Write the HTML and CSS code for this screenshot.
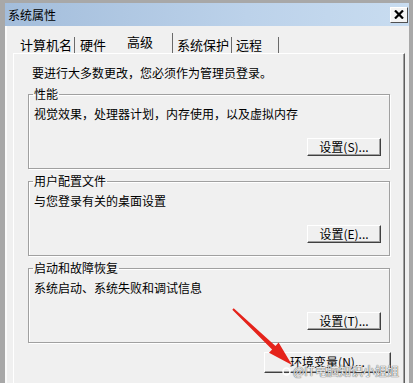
FILE: index.html
```html
<!DOCTYPE html>
<html lang="zh-CN">
<head>
  <meta charset="UTF-8">
  <meta name="viewport" content="width=device-width, initial-scale=1.0">
  <title>系统属性</title>
  <link rel="stylesheet" href="styles.css">
</head>
<body>
<div class="window">
  <div class="titlebar">
    <span class="title">系统属性</span>
    <button class="close">
      <svg width="10" height="9" viewBox="0 0 10 9"><path d="M1 0.5 L9 8.5 M9 0.5 L1 8.5" stroke="#000" stroke-width="2.2"/></svg>
    </button>
  </div>

  <div class="content">
    <div class="tabs">
      <div class="tab">计算机名</div>
      <div class="tab">硬件</div>
      <div class="tab active">高级</div>
      <div class="tab">系统保护</div>
      <div class="tab">远程</div>
    </div>

    <div class="panel">
      <p class="intro">要进行大多数更改，您必须作为管理员登录。</p>

      <fieldset class="group">
        <legend>性能</legend>
        <p class="desc">视觉效果，处理器计划，内存使用，以及虚拟内存</p>
        <div class="actions"><button class="btn">设置(S)...</button></div>
      </fieldset>

      <fieldset class="group">
        <legend>用户配置文件</legend>
        <p class="desc">与您登录有关的桌面设置</p>
        <div class="actions"><button class="btn">设置(E)...</button></div>
      </fieldset>

      <fieldset class="group">
        <legend>启动和故障恢复</legend>
        <p class="desc">系统启动、系统失败和调试信息</p>
        <div class="actions"><button class="btn">设置(T)...</button></div>
      </fieldset>

      <div class="footer">
        <button class="btn btn-wide">环境变量(N)...</button>
      </div>
    </div>
  </div>

  <!-- red arrow drawn over the screenshot -->
  <svg class="arrow" width="413" height="383" viewBox="0 0 413 383">
    <polygon points="233.7,308.3 275.5,345.9 278.6,342.6 292,365 269,352.8 272.1,349.5 232.3,309.7" fill="#e5231b"/>
  </svg>

  <div class="watermark">
    <span class="wm-icon">
      <svg width="9" height="9" viewBox="0 0 9 9"><circle cx="4.5" cy="4.5" r="3.5" fill="none" stroke="#fff" stroke-width="1.5"/></svg>
    </span>
    <span>@IT电脑知识小姐姐</span>
  </div>
</div>
</body>
</html>
```

FILE: styles.css
```css
body {
    margin: 0;
    background: #a8a8a8;
    font-family: "Noto Sans CJK SC", "Noto Sans", sans-serif;
    font-size: 12px;
    color: #000;
}
.window {
    position: relative;
    width: 413px;
    height: 383px;
    box-sizing: border-box;
    overflow: hidden;
    background: #f0f0f0;
    border-top: 3px solid #a8a8a8;
    border-left: 5px solid #a8a8a8;
    border-right: 4px solid #a8a8a8;
    box-shadow: inset 2px 0 0 #fbfbfb;
}
.titlebar {
    display: flex;
    align-items: center;
    justify-content: space-between;
    height: 23px;
    padding-left: 3px;
    background: linear-gradient(to right, #a3bddb, #bcd2ea 60%, #c8dcf0);
}
.title {
    line-height: 23px;
}
.close {
    width: 18px;
    height: 16px;
    margin-right: 1px;
    padding: 0;
    display: flex;
    align-items: center;
    justify-content: center;
    background: #f4f4f4;
    border: 1px solid;
    border-color: #fff #505050 #505050 #fff;
}

.content {
    padding: 4px 4px 0 8px;
}
.tabs {
    display: flex;
    align-items: flex-end;
    height: 23px;
    margin-left: 1px;
    font-size: 13px;
}
.tab {
    height: 16px;
    line-height: 16px;
    box-sizing: border-box;
    border-right: 1px solid #6a6a6a;
    white-space: nowrap;
}
.tab:nth-child(1) { width: 61px; padding-left: 6px; }
.tab:nth-child(2) { width: 42px; padding-left: 5px; border-right: none; }
.tab:nth-child(3) { width: 56px; padding-left: 10px; }
.tab:nth-child(4) { width: 59px; padding-left: 4px; }
.tab:nth-child(5) { width: 47px; padding-left: 4px; }
.tab.active {
    height: 20px;
    line-height: 18px;
}

.panel {
    height: 400px;
    padding: 11px 14px 0 14px;
    border-top: 1px solid #fff;
    border-left: 1px solid #fff;
    border-right: 1px solid #5e5e5e;
    box-shadow: inset -1px 0 0 #a0a0a0;
}
.intro {
    margin: 0;
    padding-left: 4px;
    line-height: 16px;
}
.group {
    margin: 6px 0 0 0;
    padding: 5px 8px 12px 5px;
    border: 1px solid #a0a0a0;
    box-shadow: 1px 1px 0 #fff, inset 1px 1px 0 #fff;
}
.group + .group {
    margin-top: 5px;
}
.group legend {
    padding: 0 1px;
    margin-left: -1px;
    line-height: 14px;
}
.desc {
    margin: 0;
    line-height: 16px;
}
.actions {
    display: flex;
    justify-content: flex-end;
    margin-top: 16px;
}
.btn {
    width: 74px;
    height: 18px;
    padding: 0;
    font-family: inherit;
    font-size: 12px;
    line-height: 14px;
    color: #000;
    background: #f0f0f0;
    border: 1px solid;
    border-color: #fff #404040 #404040 #fff;
    box-shadow: inset -1px -1px 0 #a0a0a0;
}
.footer {
    display: flex;
    justify-content: flex-end;
    margin: 9px -1px 0 0;
}
.btn-wide {
    width: 127px;
    height: 21px;
    padding-bottom: 2px;
}

.arrow {
    position: absolute;
    left: -5px;
    top: -3px;
}
.watermark {
    position: absolute;
    left: 277px;
    top: 361px;
    display: flex;
    align-items: center;
    gap: 2px;
    font-size: 12px;
    line-height: 14px;
    color: rgba(255, 255, 255, 0.9);
    text-shadow: 0 0 1px #555, 0 0 1px #555;
}
.wm-icon {
    display: flex;
}
```
